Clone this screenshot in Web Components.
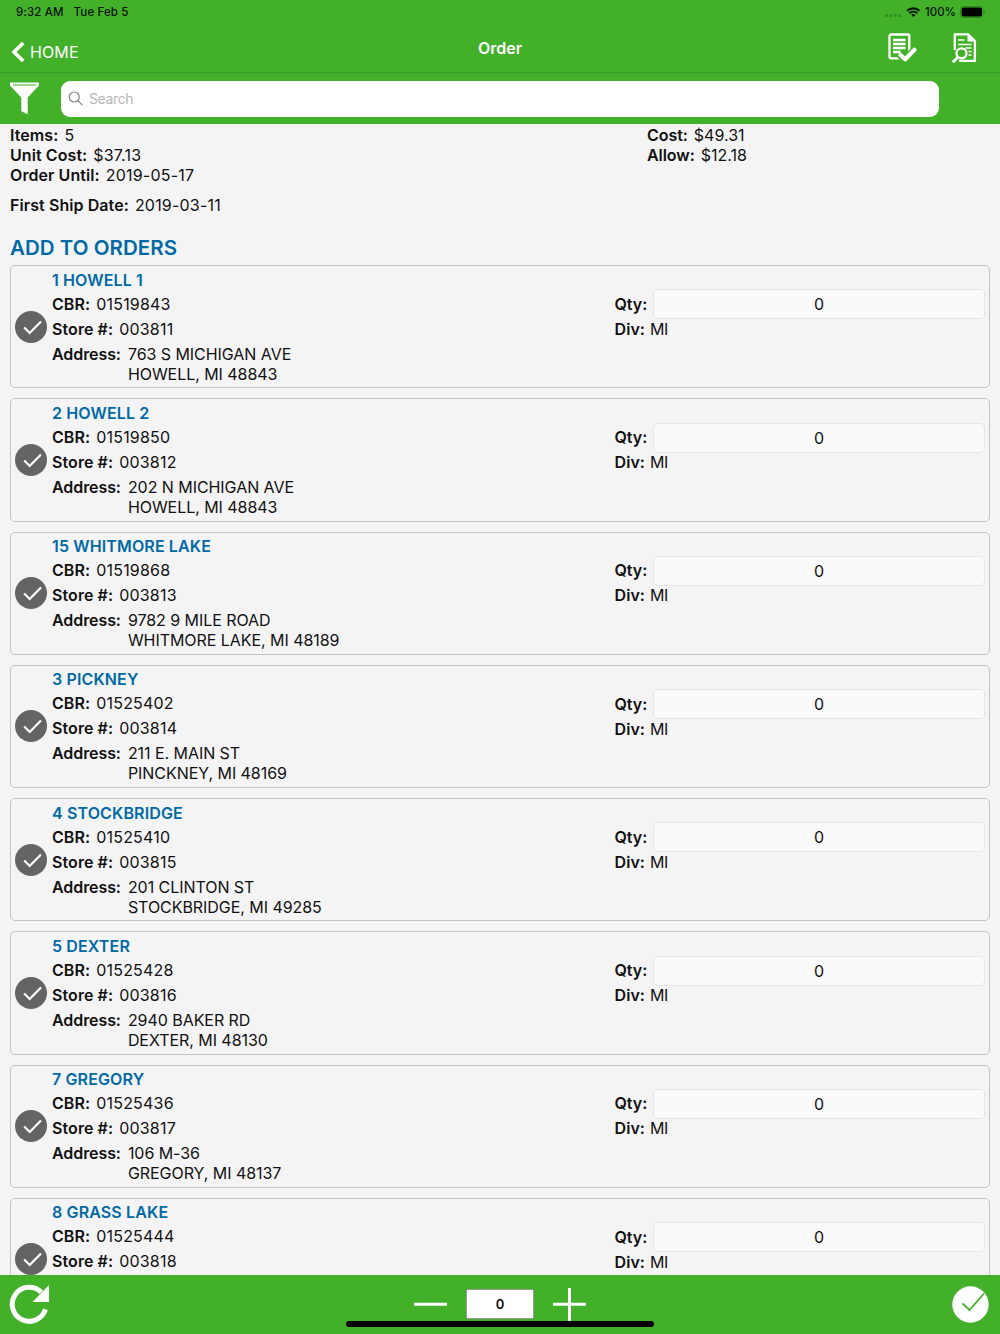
<!DOCTYPE html>
<html lang="en">
<head>
<meta charset="utf-8">
<title>Order</title>
<style>
  html, body {
    margin: 0;
    height: 100%;
    overflow: hidden;
  }

  body {
    font: 16px/20px Inter, Roboto, sans-serif;
    color: #111;
    background: #f4f4f4;
  }
</style>
</head>
<body>
<order-app></order-app>

<script>
const stores = [
  ["1 HOWELL 1", "01519843", "003811", "763 S MICHIGAN AVE", "HOWELL, MI 48843"],
  ["2 HOWELL 2", "01519850", "003812", "202 N MICHIGAN AVE", "HOWELL, MI 48843"],
  ["15 WHITMORE LAKE", "01519868", "003813", "9782 9 MILE ROAD", "WHITMORE LAKE, MI 48189"],
  ["3 PICKNEY", "01525402", "003814", "211 E. MAIN ST", "PINCKNEY, MI 48169"],
  ["4 STOCKBRIDGE", "01525410", "003815", "201 CLINTON ST", "STOCKBRIDGE, MI 49285"],
  ["5 DEXTER", "01525428", "003816", "2940 BAKER RD", "DEXTER, MI 48130"],
  ["7 GREGORY", "01525436", "003817", "106 M-36", "GREGORY, MI 48137"],
  ["8 GRASS LAKE", "01525444", "003818", "", ""],
];

class StatusBar extends HTMLElement {
  constructor() {
    super();
    this.attachShadow({ mode: "open" }).innerHTML = `
      <style>
        :host {
          display: flex;
          justify-content: space-between;
          height: 24px;
          padding: 0 14px 0 16px;
          box-sizing: border-box;
          font-size: 11.5px;
          font-weight: 500;
          line-height: 24px;
          color: #061103;
        }
        .left { display: flex; gap: 10px; letter-spacing: .12px; }
        .right { display: flex; align-items: center; }
        .pct { margin: 0 4px 0 4px; letter-spacing: 0; }
      </style>
      <div class="left"><span>9:32 AM</span><span>Tue Feb 5</span></div>
      <div class="right">
        <svg width="36" height="16" viewBox="0 0 36 16">
          <g fill="#2f8c1d">
            <circle cx="1.500" cy="11.5" r="1.5"/><circle cx="6" cy="11.5" r="1.5"/>
            <circle cx="10.400" cy="11.5" r="1.5"/><circle cx="14.800" cy="11.5" r="1.5"/>
          </g>
          <g transform="translate(-.9 -.3)">
            <g fill="none" stroke="#061103" stroke-width="2.1">
              <path d="M23.1 7.1a9 9 0 0 1 12.2 0"/>
              <path d="M25.3 9.6a5.7 5.7 0 0 1 7.8 0"/>
            </g>
            <path d="M29.2 13.4l-2-2.1a3 3 0 0 1 4 0z" fill="#061103"/>
          </g>
        </svg>
        <span class="pct">100%</span>
        <svg width="26" height="12" viewBox="0 0 26 12">
          <rect x=".5" y=".5" width="22.6" height="11" rx="3" fill="none" stroke="#2f8c1d"/>
          <rect x="1.600" y="1.600" width="20.400" height="8.800" rx="2" fill="#000"/>
          <path d="M24.2 4v4c1.4-.5 1.4-3.5 0-4z" fill="#2f8c1d"/>
        </svg>
      </div>`;
  }
}

class NavBar extends HTMLElement {
  constructor() {
    super();
    this.attachShadow({ mode: "open" }).innerHTML = `
      <style>
        :host {
          display: grid;
          grid-template-columns: 1fr auto 1fr;
          height: 49px;
          box-sizing: border-box;
          padding: 0 23px;
          border-bottom: 1px solid #3b9a27;
          color: #fff;
        }
        .back { display: flex; align-items: center; gap: 5px; padding-top: 7px; margin-left: -12px; letter-spacing: .1px; }
        .title { padding-top: 14px; font-weight: 600; letter-spacing: 0; }
        .actions { display: flex; justify-content: flex-end; gap: 34px; padding-top: 8px; }
      </style>
      <div class="back">
        <svg width="14" height="22" viewBox="0 0 14 22"><path d="M12.200 2L3 11l9.200 9" fill="none" stroke="#fff" stroke-width="3.600"/></svg>
        <slot name="back"></slot>
      </div>
      <div class="title"><slot></slot></div>
      <div class="actions">
        <svg width="30" height="32" viewBox="0 0 30 32" fill="none" stroke="#fff" stroke-width="2.300">
          <rect x="1.500" y="2.500" width="19.800" height="23.800" rx="1.500"/>
          <path d="M5 8h12.500M5 12h12.500M5 16h12.500M5 20h7.500"/>
          <path d="M12.200 23l5 4.700L27 17.500" stroke="#43b02a" stroke-width="7.500"/>
          <path d="M12.500 23l4.700 4.200L26.500 17.700" stroke-width="4.200" stroke-linecap="round" stroke-linejoin="round" />
        </svg>
        <svg width="25" height="32" viewBox="0 0 25 32" fill="none" stroke="#fff" stroke-width="2.300">
          <path d="M2.800 18V2.400h13.400l6.700 6.700V28.900H7"/>
          <path d="M15.500 1.500v8h8.300z" fill="#fff" stroke="none"/>
          <path d="M6 8h6.500M6 12.500h13.500M13.500 16h6M16.500 19.500h3M16.500 23h3" stroke-width="1.600"/>
          <circle cx="9.500" cy="21.300" r="5"/>
          <path d="M5.800 25.200L.8 30.200" stroke-width="2.800"/>
        </svg>
      </div>`;
  }
}

class SearchBar extends HTMLElement {
  constructor() {
    super();
    this.attachShadow({ mode: "open" }).innerHTML = `
      <style>
        :host {
          display: flex;
          height: 51px;
          padding: 8px 61px 7.500px 9px;
          box-sizing: border-box;
          gap: 20px;
        }
        .box {
          flex: 1;
          display: flex;
          align-items: center;
          gap: 6px;
          padding-left: 7px;
          border-radius: 9px;
          background: #fff;
          font-size: 14px;
          letter-spacing: -.38px;
          color: #b7b7b7;
        }
        .box svg { margin-top: -1px; }
      </style>
      <svg width="32" height="35" viewBox="0 0 32 35">
        <path d="M1 1.500h29v3L18.700 16.500v16.800l-6.400-3V16.500L1 4.500z" fill="#fff"/>
        <path d="M4 4h23" stroke="#43b02a" stroke-width="1"/>
      </svg>
      <div class="box">
        <svg width="15" height="15" viewBox="0 0 15 15" fill="none" stroke="#858585" stroke-width="1.200"><circle cx="6.200" cy="6" r="5"/><path d="M9.800 9.600l4.500 4.500"/></svg>
        <span><slot></slot></span>
      </div>`;
  }
}

class LabelValue extends HTMLElement {
  constructor() {
    super();
    this.attachShadow({ mode: "open" }).innerHTML = `
      <style>
        :host { display: flex; gap: 6px; white-space: nowrap; letter-spacing: .2px; }
        b { font-weight: 600; letter-spacing: var(--label-spacing, .08px); }
      </style>
      <b>${this.getAttribute("label")}</b><span><slot></slot></span>`;
  }
}

class OrderSummary extends HTMLElement {
  constructor() {
    super();
    this.attachShadow({ mode: "open" }).innerHTML = `
      <style>
        :host { display: block; padding: 1px 10px 0; }
        .cols { display: grid; grid-template-columns: 637px 1fr; }
        .ship { margin-top: 10px; }
        .money { letter-spacing: 0; --label-spacing: -.05px; }
        h1 {
          margin: 20px 0 0;
          font-size: 20.500px;
          line-height: 25px;
          font-weight: 600;
          letter-spacing: .04px;
          color: #0069a6;
        }
      </style>
      <div class="cols">
        <div>
          <label-value label="Items:">5</label-value>
          <label-value label="Unit Cost:">$37.13</label-value>
          <label-value label="Order Until:">2019-05-17</label-value>
        </div>
        <div>
          <label-value class="money" label="Cost:">$49.31</label-value>
          <label-value class="money" label="Allow:">$12.18</label-value>
        </div>
      </div>
      <label-value class="ship" label="First Ship Date:">2019-03-11</label-value>
      <h1>ADD TO ORDERS</h1>`;
  }
}

class StoreCard extends HTMLElement {
  constructor() {
    super();
    this.attachShadow({ mode: "open" });
  }

  connectedCallback() {
    const { name, cbr, store, street, city } = this.dataset;
    const address = street
      ? `<label-value class="address" label="Address:">${street}<br>${city}</label-value>`
      : "";

    this.shadowRoot.innerHTML = `
      <style>
        :host {
          display: flex;
          flex: none;
          align-items: center;
          gap: 5px;
          height: 123.250px;
          padding: 0 4px;
          box-sizing: border-box;
          border: 1px solid #c3c3c5;
          border-radius: 5px;
        }
        .check { flex: none; }
        .info { width: 557.500px; height: 114px; }
        .order { flex: 1; height: 113px; padding-top: 19.200px; box-sizing: border-box; }
        h2 {
          margin: 0 0 4px;
          font-size: 16px;
          line-height: 20px;
          font-weight: 600;
          letter-spacing: .13px;
          color: #0069a6;
        }
        label-value { margin-bottom: 5px; }
        .address { gap: 7px; letter-spacing: -.05px; --label-spacing: -.08px; }
        .div { gap: 5px; letter-spacing: -.4px; margin-top: -.5px; }
        .qty { display: flex; align-items: center; height: 30px; gap: 6px; }
        .qty b { font-weight: 600; letter-spacing: -.02px; margin-top: -1px; }
        .field {
          flex: 1;
          height: 30px;
          line-height: 28px;
          box-sizing: border-box;
          border: 1px solid #e6e6e6;
          border-radius: 5px;
          background: #fafafa;
          text-align: center;
        }
      </style>
      <svg class="check" width="32" height="32" viewBox="0 0 32 32">
        <circle cx="16" cy="16" r="16" fill="#646464"/>
        <path d="M9.200 16.500l5.500 5.500L26 10.500" fill="none" stroke="#fff" stroke-width="2.200"/>
      </svg>
      <div class="info">
        <h2>${name}</h2>
        <label-value label="CBR:">${cbr}</label-value>
        <label-value label="Store #:">${store}</label-value>
        ${address}
      </div>
      <div class="order">
        <div class="qty"><b>Qty:</b><div class="field">0</div></div>
        <label-value class="div" label="Div:">MI</label-value>
      </div>`;
  }
}

class BottomBar extends HTMLElement {
  constructor() {
    super();
    this.attachShadow({ mode: "open" }).innerHTML = `
      <style>
        :host {
          display: grid;
          grid-template-columns: 1fr auto 1fr;
          height: 59px;
          flex: none;
          padding: 0 9px;
          box-sizing: border-box;
          background: #43b02a;
          position: relative;
        }
        .refresh { margin-top: 9px; }
        .done { margin: 11px 2px 0 0; justify-self: end; }
        .stepper { display: flex; gap: 19px; padding-top: 13px; }
        .count {
          width: 68px;
          height: 30px;
          margin-top: 1px;
          box-sizing: border-box;
          border: 1px solid #999;
          border-radius: 2px;
          background: #fff;
          text-align: center;
          font-size: 13px;
          font-weight: 600;
          line-height: 28px;
        }
        /* home indicator sits over the bar */
        .home {
          position: absolute;
          left: 346px;
          bottom: 7.500px;
          width: 308px;
          height: 5.500px;
          border-radius: 3px;
          background: #000;
        }
      </style>
      <svg class="refresh" width="42" height="42" viewBox="0 0 42 42">
        <path d="M32.300 8.300A17 17 0 1 0 36.500 25.300" fill="none" stroke="#fff" stroke-width="5"/>
        <path d="M40 1v17H23.500z" fill="#fff"/>
      </svg>
      <div class="stepper">
        <svg width="33" height="33" viewBox="0 0 33 33"><path d="M0 16.300h33" stroke="#fff" stroke-width="3"/></svg>
        <div class="count">0</div>
        <svg width="33" height="33" viewBox="0 0 33 33"><path d="M0 16.300h33M16.500 0v33" stroke="#fff" stroke-width="3"/></svg>
      </div>
      <svg class="done" width="37" height="37" viewBox="0 0 37 37">
        <circle cx="18.500" cy="18.500" r="18.200" fill="#fff"/>
        <path d="M10.500 17.500l7 6.500L32 7.500" fill="none" stroke="#43b02a" stroke-width="1.800"/>
      </svg>
      <div class="home"></div>`;
  }
}

class OrderApp extends HTMLElement {
  constructor() {
    super();
    const cards = stores
      .map(
        ([name, cbr, store, street, city]) =>
          `<store-card data-name="${name}" data-cbr="${cbr}" data-store="${store}" data-street="${street}" data-city="${city}"></store-card>`
      )
      .join("");

    this.attachShadow({ mode: "open" }).innerHTML = `
      <style>
        :host { display: flex; flex-direction: column; height: 1334px; }
        header { flex: none; background: #43b02a; }
        main { flex: 1; min-height: 0; overflow: hidden; }
        .list { display: flex; flex-direction: column; gap: 10px; padding: 5px 10px 0; }
      </style>
      <header>
        <status-bar></status-bar>
        <nav-bar><span slot="back">HOME</span>Order</nav-bar>
        <search-bar>Search</search-bar>
      </header>
      <main>
        <order-summary></order-summary>
        <div class="list">${cards}</div>
      </main>
      <bottom-bar></bottom-bar>`;
  }
}

customElements.define("status-bar", StatusBar);
customElements.define("nav-bar", NavBar);
customElements.define("search-bar", SearchBar);
customElements.define("label-value", LabelValue);
customElements.define("order-summary", OrderSummary);
customElements.define("store-card", StoreCard);
customElements.define("bottom-bar", BottomBar);
customElements.define("order-app", OrderApp);
</script>
</body>
</html>
